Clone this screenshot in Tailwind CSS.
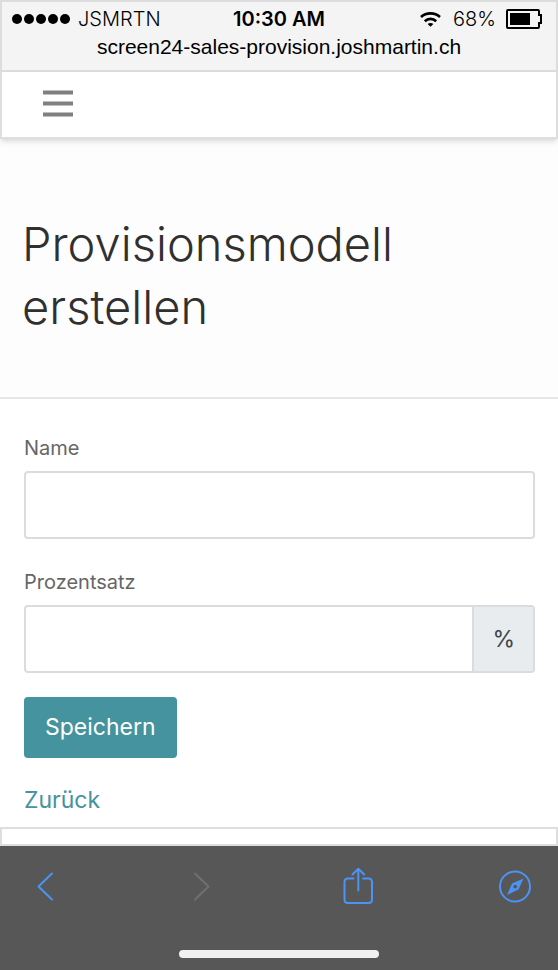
<!DOCTYPE html>
<html lang="de">
<head>
	<meta charset="UTF-8">
	<meta name="viewport" content="width=device-width, initial-scale=1.0">
	<title>Provisionsmodell erstellen</title>
	<script src="https://cdn.jsdelivr.net/npm/@tailwindcss/browser@4"></script>
</head>
<body class="min-h-screen flex flex-col bg-white font-[Inter,sans-serif] text-[#303030]">
	<!-- Status bar -->
	<div class="bg-[#f4f4f4] border-2 border-[#dcdcdc] text-black pt-[3px] pb-[9px]">
		<div class="grid grid-cols-3 items-center leading-7 text-xl">
			<div class="flex items-center gap-2 pl-[10px] font-light">
				<svg class="w-[58px] h-[10px]" viewBox="0 0 58 10" fill="currentColor">
					<circle cx="5" cy="5" r="5"/>
					<circle cx="17" cy="5" r="5"/>
					<circle cx="29" cy="5" r="5"/>
					<circle cx="41" cy="5" r="5"/>
					<circle cx="53" cy="5" r="5"/>
				</svg>
				<span>JSMRTN</span>
			</div>
			<div class="text-center font-semibold whitespace-nowrap">10:30 AM</div>
			<div class="flex items-center justify-end gap-[10px] pr-[14px] font-light">
				<svg class="w-[21px] h-[15px] mr-0.5" viewBox="0 0 21 15" fill="none" stroke="currentColor" stroke-width="2.6">
					<path d="M1 5C6.200.2 14.800.2 20 5"/>
					<path d="M4.800 9.200c3.200-3.100 8.200-3.100 11.400 0"/>
					<path d="M7.600 12c1.700-1.500 4.100-1.500 5.800 0L10.500 14.800z" fill="currentColor" stroke="none"/>
				</svg>
				<span>68%</span>
				<svg class="w-9 h-5" viewBox="0 0 36 20" fill="none" stroke="currentColor" stroke-width="2">
					<path d="M2 1h30q1 0 1 1v4h2v8h-2v4q0 1-1 1H2q-1 0-1-1V2q0-1 1-1z"/>
					<path d="M4 4h20v12H4z" fill="currentColor" stroke="none"/>
				</svg>
			</div>
		</div>
		<div class="text-center text-[21px] leading-7 font-['Liberation_Sans',sans-serif]">screen24-sales-provision.joshmartin.ch</div>
	</div>

	<!-- Navigation -->
	<nav class="relative bg-white border-x-2 border-b-2 border-[#dedede] shadow-md px-[41px] py-[18px]">
		<button type="button" aria-label="Menü" class="block text-[#808080]">
			<svg class="w-[30px] h-[29px]" viewBox="0 0 30 29" stroke="currentColor" stroke-width="4">
				<path d="M0 2.500h30M0 13.500h30M0 24.500h30"/>
			</svg>
		</button>
	</nav>

	<header class="bg-[#fdfdfd] border-b-2 border-[#e6e6e6] px-[22px] pt-[73px] pb-[59px]">
		<h1 class="text-[47px] leading-[63px] font-light">Provisionsmodell erstellen</h1>
	</header>

	<main class="pl-6 pr-[23px] pt-[34px] pb-[9px]">
		<form>
			<div class="mb-7">
				<label for="name" class="block mb-2 text-xl leading-[30px] text-[#666]">Name</label>
				<input type="text" id="name" name="name" class="block w-full h-[68px] px-5 text-[23px] border-2 border-[#d9dde0] rounded-sm">
			</div>
			<div class="mb-6">
				<label for="percentage" class="block mb-2 text-xl leading-[30px] text-[#666]">Prozentsatz</label>
				<div class="flex h-[68px] border-2 border-[#d9dde0] rounded-sm">
					<input type="text" id="percentage" name="percentage" class="flex-1 min-w-0 px-5 text-[23px]">
					<span class="flex items-center px-[18px] bg-[#e9ecef] border-l-2 border-[#d9dde0] text-[23px] text-[#404548]">%</span>
				</div>
			</div>
			<button type="submit" class="block px-[21px] h-[61px] mb-6 rounded-sm bg-[#45939e] text-white text-[23px]">Speichern</button>
			<a href="#" class="inline-block text-[23px] leading-9 text-[#45939e]">Zurück</a>
		</form>
	</main>

	<footer class="h-[19px] border-2 border-[#dedede]"></footer>

	<!-- Browser toolbar -->
	<div class="mt-auto bg-[#575757] pt-5 pb-3">
		<div class="flex justify-between pl-[29px] pr-[27px] text-[#4b93f5]">
			<button type="button" aria-label="Zurück">
				<svg class="w-8 h-10" viewBox="0 0 32 40" fill="none" stroke="currentColor" stroke-width="2" stroke-linecap="round" stroke-linejoin="round">
					<path d="M23 7.500L9.500 20.500L23 33.500"/>
				</svg>
			</button>
			<button type="button" aria-label="Vorwärts" class="text-[#707070]">
				<svg class="w-8 h-10" viewBox="0 0 32 40" fill="none" stroke="currentColor" stroke-width="2" stroke-linecap="round" stroke-linejoin="round">
					<path d="M9 7.500L22.500 20.500L9 33.500"/>
				</svg>
			</button>
			<button type="button" aria-label="Teilen">
				<svg class="w-8 h-10" viewBox="0 0 32 40" fill="none" stroke="currentColor" stroke-width="2" stroke-linecap="round" stroke-linejoin="round">
					<path d="M11.500 12.500H6q-3.500 0-3.500 3.500v17.500q0 3.500 3.500 3.500h20.500q3.500 0 3.500-3.500V16q0-3.500-3.500-3.500H21"/>
					<path d="M16.300 24.500V3M10.500 8.500l5.800-5.800 5.800 5.800"/>
				</svg>
			</button>
			<button type="button" aria-label="Safari">
				<svg class="w-8 h-10" viewBox="0 0 32 40" fill="none" stroke="currentColor" stroke-width="2">
					<circle cx="16" cy="20.500" r="15"/>
					<path d="M24.500 12.500L19.500 23.500L8 29L13 17.500z" fill="currentColor" stroke="none"/>
					<circle cx="16.200" cy="20.600" r="1.900" fill="#575757" stroke="none"/>
				</svg>
			</button>
		</div>
		<div class="w-[200px] h-2 mt-11 mx-auto rounded-full bg-[#f0f0f0]"></div>
	</div>
</body>
</html>
